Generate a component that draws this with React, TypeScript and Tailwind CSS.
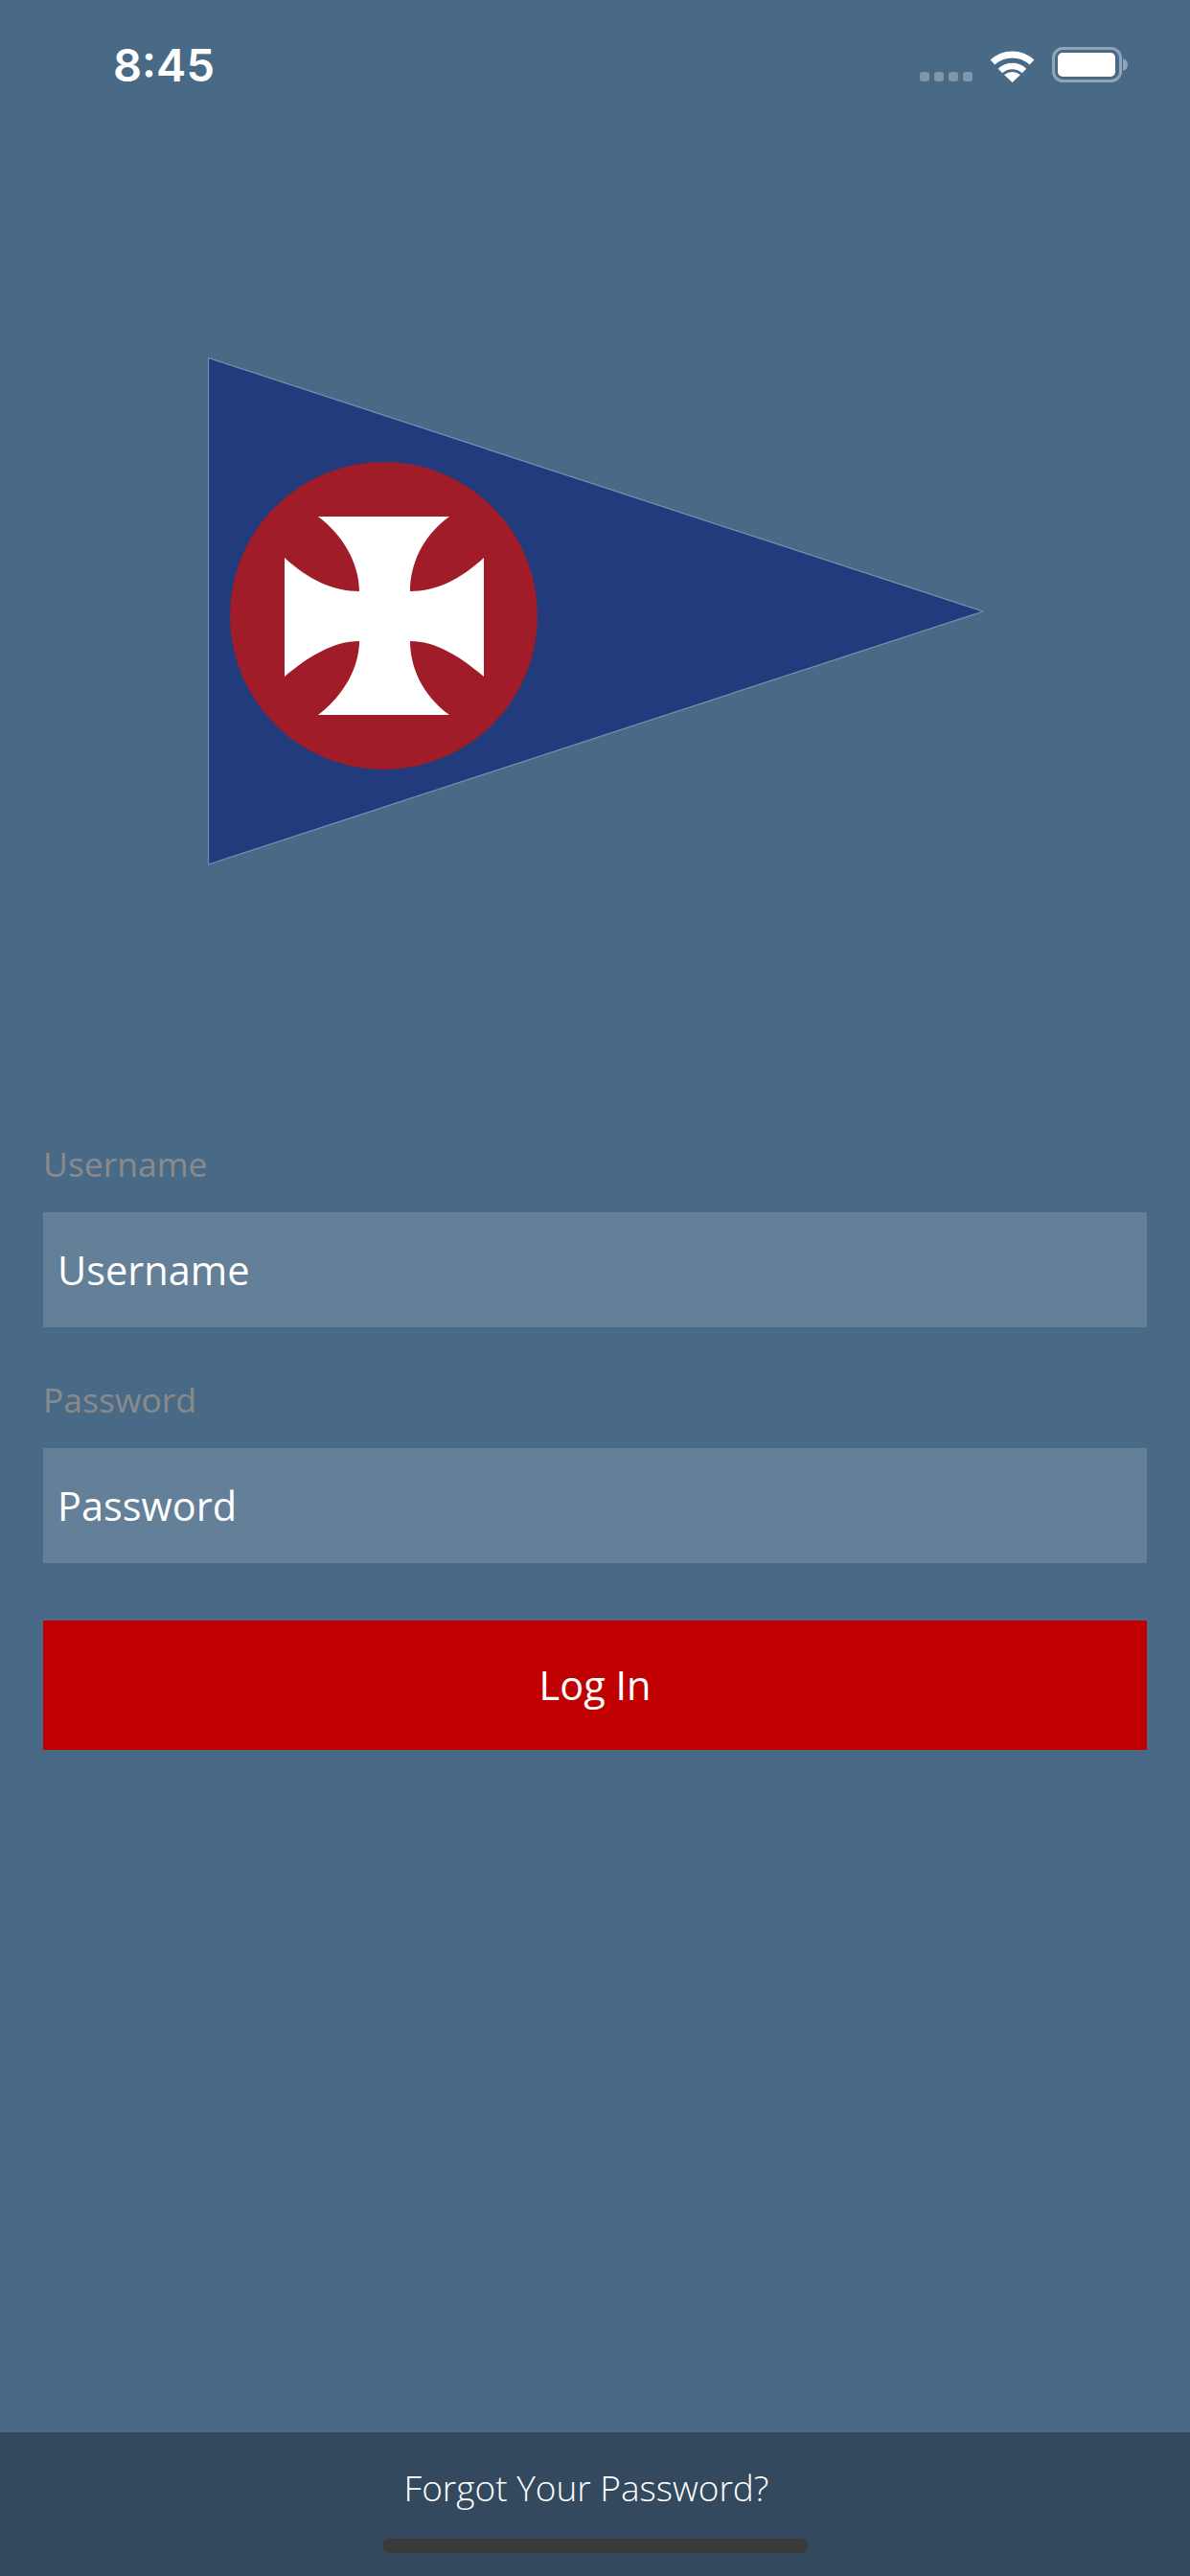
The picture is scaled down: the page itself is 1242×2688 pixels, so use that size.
export default function App() {
  const fields = ["Username", "Password"];

  return (
    <div className="w-[1242px] h-[2688px] flex flex-col bg-[#496a87] font-['Open_Sans',sans-serif] overflow-hidden">
      {/* Status bar */}
      <div className="h-[132px] pl-[118px] pr-[65px] pt-[38px] flex justify-between items-start">
        <span className="font-['Inter',sans-serif] font-semibold text-[47px] leading-[60px] text-white">
          8:45
        </span>
        <div className="flex items-end pt-[11px] gap-[18px]">
          <div className="flex gap-[5px] pb-[1px]">
            {[0, 1, 2, 3].map((i) => (
              <div key={i} className="w-[10px] h-[10px] rounded-[3px] bg-[#7e95aa]" />
            ))}
          </div>
          <svg width="47" height="36" viewBox="0 0 47 36" fill="none" className="block">
            <path d="M3 15 A 30 30 0 0 1 44 15" stroke="#fff" strokeWidth="7" />
            <path d="M11 24 A 18 18 0 0 1 36 24" stroke="#fff" strokeWidth="6.5" />
            <path d="M23.5 36 L15 28 Q23.5 22 32 28 Z" fill="#fff" />
          </svg>
          <svg width="79" height="37" viewBox="0 0 79 37" fill="none" className="block">
            <rect x="1.5" y="1.5" width="70" height="34" rx="10" stroke="#90a5b8" strokeWidth="3" />
            <rect x="6" y="6" width="60" height="25" rx="5" fill="#fff" />
            <path d="M74 12 C77 13 79 15.500 79 18.500 C79 21.500 77 24 74 25 Z" fill="#90a5b8" />
          </svg>
        </div>
      </div>

      {/* Club pennant */}
      <div className="pl-[217px] pt-[241px]">
        <svg width="812" height="531" viewBox="217 373 812 531" className="block">
          <path
            d="M217.500 373.500 L1026 638 L217.500 902 Z"
            fill="#223b7c"
            stroke="#7d8fb0"
            strokeWidth="1.2"
            strokeLinejoin="round"
          />
          <circle cx="400.500" cy="642.500" r="160.500" fill="#9f1c28" />
          <path
            fill="#fff"
            d="M332 539 L469 539 C440 560 428 590 428 617 C455 617 480 605 505 582 L505 706 C480 685 455 669 428 669 C428 695 440 725 469 746 L332 746 C360 725 375 695 375 669 C348 669 322 685 297 706 L297 582 C322 605 348 617 375 617 C375 590 360 560 332 539 Z"
          />
        </svg>
      </div>

      {/* Login form */}
      <div className="px-[45px] pt-[285px] flex flex-col">
        <div className="flex flex-col gap-[50px]">
          {fields.map((field) => (
            <div key={field} className="flex flex-col">
              <label className="text-[35.500px] leading-[50px] h-[76px] text-[#8a8a8a]">{field}</label>
              <div className="h-[120px] pl-[15px] flex items-center bg-[#647f98] text-[41.500px] text-white">
                {field}
              </div>
            </div>
          ))}
        </div>
        <button className="mt-[60px] h-[135px] bg-[#c00000] text-[41.500px] text-white">Log In</button>
      </div>

      {/* Footer */}
      <div className="mt-auto h-[150px] flex flex-col items-center bg-[#33495e]">
        <span className="mt-[33px] pr-[18px] font-light text-[37px] leading-[50px] text-white">
          Forgot Your Password?
        </span>
        <div className="mt-[28px] w-[444px] h-[15px] rounded-full bg-[#3a3a3a]" />
      </div>
    </div>
  );
}
